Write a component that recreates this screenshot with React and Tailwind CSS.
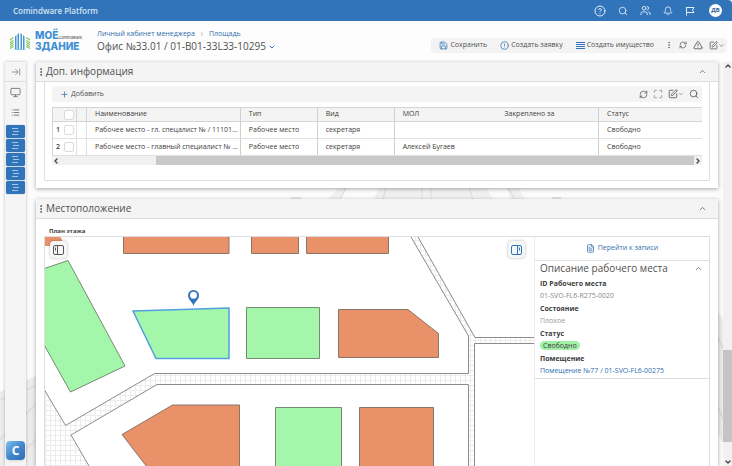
import React from "react";
import {
  CircleHelp, Search, Users, Bell, ChevronDown, ChevronUp, ChevronRight, ChevronLeft,
  Save, CircleAlert, EllipsisVertical, RefreshCw, TriangleAlert, SquarePen, Plus, Maximize,
  ArrowRightToLine, Monitor, List, FileText,
} from "lucide-react";

function IconButton({ label, children, className = "" }) {
  return (
    <button type="button" aria-label={label} className={`flex shrink-0 items-center justify-center ${className}`}>
      {children}
    </button>
  );
}

function TopBar() {
  return (
    <header className="flex h-[21px] shrink-0 items-center justify-between rounded-tr-sm bg-[#3274b9] pr-[10px] pl-[13px] text-white">
      <span className="text-[8px] font-semibold text-[#d3e4f5]">Comindware Platform</span>
      <div className="flex items-center gap-3 text-[#e3eefa]">
        <IconButton label="Справка"><CircleHelp size={12} strokeWidth={2} /></IconButton>
        <IconButton label="Поиск"><Search size={10} strokeWidth={2} /></IconButton>
        <IconButton label="Пользователи"><Users size={11} strokeWidth={2} /></IconButton>
        <IconButton label="Уведомления"><Bell size={10} strokeWidth={2} /></IconButton>
        <IconButton label="Задачи">
          <svg width="10" height="10" viewBox="0 0 10 10" fill="none" stroke="currentColor">
            <path d="M1.5 1v8.500M1.500 1.500h7.500L7.500 4l1.500 2.500H1.500" />
          </svg>
        </IconButton>
        <button type="button" className="ml-[2px] flex size-[13px] items-center justify-center rounded-full bg-white text-[6px] font-bold text-[#2d5f98]">ДВ</button>
      </div>
    </header>
  );
}

function Logo() {
  return (
    <div className="flex w-[72px] shrink-0 items-center gap-1">
      <svg width="22" height="20" viewBox="0 0 22 20" className="shrink-0">
        <g fill="#4797d8">
          <path d="M6 5.500L7.500 4v14.500H6zM8.500 3.200L10 2v17H8.500zM11.500 2l1.500 1.200V19h-1.500zM14 4l1.500 1.500v13H14z" />
        </g>
        <path d="M4 19q7-2.500 14 0z" fill="#82c7ed" />
        <g fill="none" stroke="#86c766" strokeWidth="1.300">
          <path d="M4.300 6.500L1 9M1 11.500l3.500-2M1 13.500l3.500-2M1 15.500l3.500-2M1 17.500l3.500-2M17.200 6.500L21 9M21 11.500l-3.800-2M21 13.500l-3.800-2M21 15.500l-3.800-2M21 17.500l-3.800-2" />
        </g>
      </svg>
      <div className="font-['Inter','Noto_Sans',sans-serif] text-[#3f8fd4]">
        <div className="flex h-[11px] items-end">
          <span className="text-[10px] leading-[11px] font-extrabold">МОЁ</span>
          <span className="text-[4px] leading-[6px] text-[#333]">Comindware</span>
        </div>
        <div className="text-[10px] leading-[11px] font-extrabold">ЗДАНИЕ</div>
      </div>
    </div>
  );
}

function LinesIcon() {
  return (
    <svg width="9" height="9" viewBox="0 0 9 9" stroke="currentColor" className="text-[#3274b9]">
      <path d="M0 1.500h9M0 3.500h9M0 5.500h9M0 7.500h9" />
    </svg>
  );
}

function PageHeader() {
  return (
    <div className="flex h-[40px] shrink-0 items-center justify-between bg-[#fdfdfd]/90 pr-[5px] pl-[9px]">
      <div className="flex items-center gap-4">
        <Logo />
        <div>
          <nav className="flex h-[11px] items-center gap-1 text-[7px] text-[#2f6eac]">
            <a href="#cabinet">Личный кабинет менеджера</a>
            <ChevronRight size={6} className="text-[#777]" />
            <a href="#area">Площадь</a>
          </nav>
          <h1 className="flex h-[14px] items-center gap-[2px] text-[10px] text-[#505050]">
            Офис №33.01 / 01-B01-33L33-10295
            <IconButton label="Выбрать запись"><ChevronDown size={8} strokeWidth={3} className="text-[#3274b9]" /></IconButton>
          </h1>
        </div>
      </div>
      <div className="mt-2 flex h-[15px] items-center rounded-sm bg-[#f3f3f3] pr-[2px] pl-2 text-[7px] text-[#505050]">
        <button type="button" className="mr-[13px] flex items-center gap-[2px]"><Save size={9} className="text-[#3274b9]" />Сохранить</button>
        <button type="button" className="mr-[13px] flex items-center gap-[2px]"><CircleAlert size={9} className="text-[#3274b9]" />Создать заявку</button>
        <button type="button" className="flex items-center gap-[2px]"><LinesIcon />Создать имущество</button>
        <div className="ml-[11px] flex items-center gap-[6px] text-[#555]">
          <IconButton label="Ещё"><EllipsisVertical size={8} /></IconButton>
          <IconButton label="Обновить"><RefreshCw size={8} /></IconButton>
          <IconButton label="Предупреждения"><TriangleAlert size={10} /></IconButton>
          <IconButton label="Изменить"><SquarePen size={9} /><ChevronDown size={7} /></IconButton>
        </div>
      </div>
    </div>
  );
}

function TextLines() {
  return (
    <svg width="9" height="7" viewBox="0 0 9 7" stroke="currentColor">
      <path d="M1 .5h6M2 3.500h6M1 6.500h6" />
    </svg>
  );
}

function Sidebar() {
  return (
    <aside className="ml-[5px] flex w-[21px] shrink-0 flex-col items-center bg-[#f5f5f5] shadow-[0_0_3px_rgba(0,0,0,0.25)]">
      <IconButton label="Развернуть" className="h-[20px] w-full border-b border-[#dcdcdc] text-[#888]"><ArrowRightToLine size={10} strokeWidth={2} /></IconButton>
      <IconButton label="Рабочий стол" className="h-[20px] w-full text-[#777]"><Monitor size={11} strokeWidth={2} /></IconButton>
      <IconButton label="Список" className="h-[20px] w-full text-[#555]"><List size={9} strokeWidth={2} /></IconButton>
      <nav className="mt-[3px] flex w-full flex-col gap-px px-px">
        {["Раздел 1", "Раздел 2", "Раздел 3", "Раздел 4", "Раздел 5"].map((item) => (
          <IconButton key={item} label={item} className="h-[13px] rounded-xs bg-[#3274b9] text-[#a3c6e9] shadow-[0_0_1px_#3274b9]"><TextLines /></IconButton>
        ))}
      </nav>
      <button type="button" className="mt-auto mb-[6px] flex size-[19px] items-center justify-center rounded-sm bg-linear-to-br from-[#7fc0f0] via-[#4288cd] to-[#2f6db2] text-[12px] font-bold text-white shadow-sm">C</button>
    </aside>
  );
}

function CardHeader({ title }) {
  return (
    <div className="flex h-[20px] shrink-0 items-center border-b border-[#dedede] bg-[#f4f4f4] pr-[11px]">
      <EllipsisVertical size={10} strokeWidth={2} className="text-[#444]" />
      <h2 className="flex-1 text-[10px] text-[#505050]">{title}</h2>
      <IconButton label="Свернуть"><ChevronUp size={9} className="text-[#555]" /></IconButton>
    </div>
  );
}

const rows = [
  ["Рабочее место - гл. спецалист № / 11101...", "Рабочее место", "секретаря", "", "", "Свободно"],
  ["Рабочее место - главный специалист № ...", "Рабочее место", "секретаря", "Алексей Бугаев", "", "Свободно"],
];
const heads = ["Наименование", "Тип", "Вид", "МОЛ", "Закреплено за", "Статус"];
const ruled = ["border-r border-r-[#cfcfcf]", "border-r border-r-[#cfcfcf]", "border-r border-r-[#cfcfcf]", "", "border-r border-r-[#cfcfcf]", ""];

function Tick({ label }) {
  return <input type="checkbox" aria-label={label} className="block size-[10px] appearance-none rounded-xs border border-[#dadada] bg-white" />;
}

function InfoCard() {
  return (
    <section className="shrink-0 bg-white pb-[7px] shadow-[0_1px_4px_rgba(0,0,0,0.35)]">
      <CardHeader title="Доп. информация" />
      <div className="mx-2 rounded-b-xs border-x border-b border-[#dedede] px-[7px] pt-1 pb-[15px]">
        <div className="mb-[5px] flex h-[16px] items-center justify-between rounded-xs bg-[#f4f4f4] pr-[3px] pl-2 text-[7px] text-[#505050]">
          <button type="button" className="flex items-center gap-[2px]"><Plus size={9} className="text-[#3274b9]" />Добавить</button>
          <div className="flex items-center gap-[5px] text-[#555]">
            <IconButton label="Обновить"><RefreshCw size={9} /></IconButton>
            <IconButton label="Во весь экран"><Maximize size={10} className="text-[#888]" /></IconButton>
            <IconButton label="Изменить"><SquarePen size={10} /><ChevronDown size={6} /></IconButton>
            <IconButton label="Поиск"><Search size={10} /></IconButton>
          </div>
        </div>
        <table className="w-full table-fixed border-separate border-spacing-0 border-l border-[#d4d4d4] text-left text-[7px] text-[#404040]">
          <colgroup>
            <col className="w-[11px]" /><col className="w-[13px]" /><col className="w-[10px]" />
            <col className="w-[23.700%]" /><col className="w-[11.850%]" /><col className="w-[11.850%]" />
            <col className="w-[15.700%]" /><col className="w-[15.800%]" /><col />
          </colgroup>
          <thead>
            <tr className="h-[15px] bg-[#f4f4f4]">
              <th className="border-y border-[#d4d4d4] p-0" />
              <th className="border-y border-r border-[#d4d4d4] p-0"><Tick label="Выбрать все" /></th>
              <th className="border-y border-r border-[#d4d4d4] p-0" />
              {heads.map((head, i) => (
                <th key={head} className={`border-y border-y-[#d4d4d4] px-2 py-0 font-normal ${ruled[i]}`}>{head}</th>
              ))}
            </tr>
          </thead>
          <tbody>
            {rows.map((row, r) => (
              <tr key={row[0]} className="h-[17px]">
                <td className="border-b border-[#e0e0e0] p-0 pl-[3px] font-semibold">{r + 1}</td>
                <td className="border-r border-b border-[#e0e0e0] p-0"><Tick label={`Выбрать строку ${r + 1}`} /></td>
                <td className="border-r border-b border-[#e0e0e0] p-0" />
                {row.map((cell, i) => (
                  <td key={i} className={`border-b border-b-[#e0e0e0] py-0 pl-2 whitespace-nowrap ${ruled[i]}`}>{cell}</td>
                ))}
              </tr>
            ))}
          </tbody>
        </table>
        <div className="flex h-[9px] items-center bg-[#f1f1f1] text-[#444]">
          <ChevronLeft size={8} strokeWidth={4} />
          <div className="ml-[14.800%] h-full flex-1 bg-[#c9c9c9]" />
          <ChevronRight size={8} strokeWidth={4} />
        </div>
      </div>
    </section>
  );
}

function FloorPlan() {
  return (
    <svg viewBox="45 237 490 229" preserveAspectRatio="xMinYMin slice" className="h-full w-full" aria-label="План этажа">
      <defs>
        <pattern id="grid" width="5" height="5" patternUnits="userSpaceOnUse">
          <path d="M0 .5h5M.5 0v5" stroke="#ececec" strokeWidth="1" />
        </pattern>
      </defs>
      <path d="M411 237h7l57 100h60v6h-60.500v123h-6v-81.500H157L71 435l18 31H44v-77l21.500 36.500 89-52h314V336z" fill="url(#grid)" />
      <g fill="none" stroke="#8c8c8c" strokeWidth="1">
        <path d="M44 389l21.500 36.500 89-52h314V336L411 237" />
        <path d="M418 237l57 100.500h60M535 343.500h-60.500V466" />
        <path d="M89 466l-18-31 86-50.500h311.500V466" />
      </g>
      <g stroke="#8a756b" strokeWidth="1" fill="#e9926a">
        <path d="M43 236h17l3 6-4 4H43z" stroke="none" />
        <path d="M123.500 236h105.500v17.500H123.500zM251.500 236h47v17.500h-47zM306.500 236h82v17.500h-82z" />
        <path d="M338.500 309.500H408l30.500 24v24h-100z" />
        <path d="M172.500 405H239.500v62H147L122 434.500zM359.500 407.500h74V467h-74z" />
      </g>
      <g stroke="#768a76" strokeWidth="1" fill="#a4f7aa">
        <path d="M43 269l25-8.500 57 105.500-54.500 26L43 343z" />
        <path d="M246.500 307.500h73v51h-73zM275.500 407.500h66V467h-66z" />
        <path d="M133 311l96-3v50.500h-73z" stroke="#519fdf" strokeWidth="1.500" />
      </g>
      <path d="M193.500 306c-1-4.500-5.500-6-5.500-10.500a5.500 5.500 0 0 1 11 0c0 4.500-4.500 6-5.500 10.500z" fill="#3274b9" />
      <circle cx="193.500" cy="295.300" r="3.500" fill="white" />
    </svg>
  );
}

function PanelIcon({ right }) {
  return (
    <svg width="11" height="10" viewBox="0 0 11 10" fill="none" stroke="currentColor" strokeWidth="1" className={right ? "-scale-x-100" : ""}>
      <rect x=".5" y=".5" width="10" height="9" rx="1.500" />
      <path d="M4.500 .5v9M2.500 2.500v3" />
    </svg>
  );
}

function PlaceDetails() {
  return (
    <div className="w-[176px] shrink-0 border-r border-l border-r-[#dedede] border-l-[#ececec] bg-white text-[7px] text-[#404040]">
      <a href="#record" className="flex h-[24px] items-center justify-center gap-[3px] border-b border-[#e0e0e0] text-[#2f70af]">
        <FileText size={9} />Перейти к записи
      </a>
      <div className="border-b border-[#dedede] pr-[6px] pb-px pl-[5px]">
        <div className="flex h-[15px] items-center justify-between">
          <h3 className="text-[10px] text-[#505050]">Описание рабочего места</h3>
          <IconButton label="Свернуть"><ChevronUp size={9} className="text-[#555]" /></IconButton>
        </div>
        <dl className="pt-px leading-[13px] [&>dt]:h-[12px] [&>dt]:font-bold">
          <dt>ID Рабочего места</dt>
          <dd className="h-[13px] text-[#888]">01-SVO-FL6-R275-0020</dd>
          <dt>Состояние</dt>
          <dd className="h-[13px] text-[#999]">Плохое</dd>
          <dt>Статус</dt>
          <dd className="flex h-[13px] items-center"><span className="rounded-full bg-[#a0f0a6] px-[3px] leading-[9px]">Свободно</span></dd>
          <dt>Помещение</dt>
          <dd className="h-[13px]"><a href="#room" className="text-[#2f70af]">Помещение №77 / 01-SVO-FL6-00275</a></dd>
        </dl>
      </div>
    </div>
  );
}

function LocationCard() {
  return (
    <section className="flex min-h-0 flex-1 flex-col bg-white shadow-[0_1px_4px_rgba(0,0,0,0.35)]">
      <CardHeader title="Местоположение" />
      <h3 className="h-[17px] shrink-0 pt-[7px] pl-[13px] text-[6px] leading-[10px] font-bold text-[#404040]">План этажа</h3>
      <div className="mx-2 flex min-h-0 flex-1 border-t border-l border-[#dedede]">
        <div className="relative min-w-0 flex-1 overflow-hidden bg-white">
          <FloorPlan />
          <IconButton label="Левая панель" className="absolute top-[4px] left-[5px] size-[17px] rounded-sm bg-[#f7f7f7] text-[#555] shadow-[0_0_3px_rgba(0,0,0,0.3)]"><PanelIcon /></IconButton>
          <IconButton label="Правая панель" className="absolute top-[4px] right-[9px] size-[17px] rounded-sm bg-[#f4f6f8] text-[#3274b9] shadow-[0_0_3px_rgba(0,0,0,0.3)]"><PanelIcon right /></IconButton>
        </div>
        <PlaceDetails />
      </div>
    </section>
  );
}

function Backdrop() {
  return (
    <svg viewBox="0 0 732 466" preserveAspectRatio="none" className="absolute inset-0 -z-10 h-full w-full" aria-hidden="true">
      <rect width="732" height="466" fill="#fcfcfc" />
      <path d="M340 186l-12 14h11l9-14zM380 186l-7 14h120l-7-14zM506 186l5 14h14l-7-14z" fill="#f1f1f1" />
      <path d="M347 186l-7 14M386 186l-3 14M422 186v14M431 186v14M469 186l4 14M507 186l8 14" stroke="#dcdcdc" />
      <path d="M291 198h10M552 198h9" stroke="#e4e4e4" strokeWidth="2" />
      <path d="M0 392l40-18v92H0z" fill="#ececec" />
      <path d="M0 400l40-16M0 440l40-40M8 466l32-30" stroke="#e0e0e0" strokeWidth="2" />
      <path d="M714 305l12 20v125l-12-25z" fill="#ebebeb" />
      <path d="M714 330l12 24M714 400l12 24" stroke="#dcdcdc" strokeWidth="2" />
    </svg>
  );
}

export default function App() {
  return (
    <div className="relative isolate flex h-screen flex-col overflow-hidden font-['Open_Sans','Noto_Sans',sans-serif]">
      <Backdrop />
      <TopBar />
      <PageHeader />
      <div className="flex min-h-0 flex-1 pt-px">
        <Sidebar />
        <main className="mr-[5px] ml-[10px] flex min-w-0 flex-1 flex-col gap-[11px]">
          <InfoCard />
          <LocationCard />
        </main>
        <div className="flex w-[9px] shrink-0 flex-col items-center bg-[#f1f1f1] text-[#444]">
          <ChevronUp size={8} strokeWidth={4} />
          <div className="mt-auto h-[92px] w-full bg-[#c4c4c4]" />
          <ChevronDown size={8} strokeWidth={4} className="mt-4" />
        </div>
      </div>
    </div>
  );
}
